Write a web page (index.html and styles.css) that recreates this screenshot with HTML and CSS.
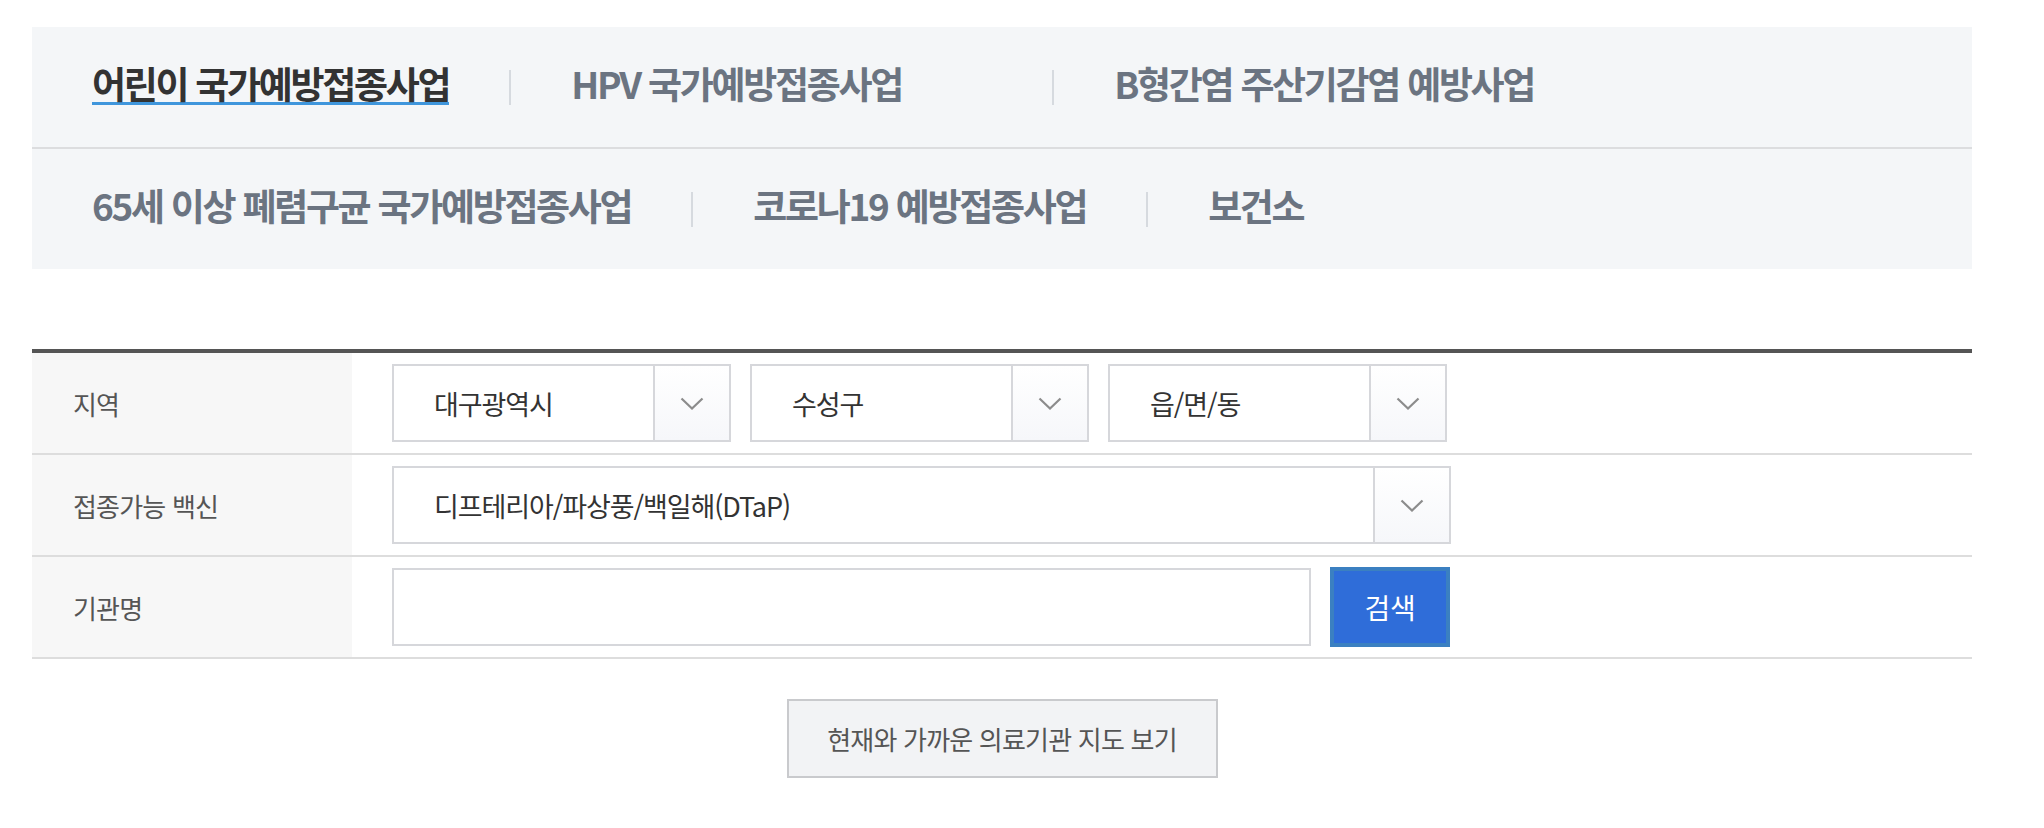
FILE: index.html
```html
<!DOCTYPE html>
<html lang="ko">
<head>
  <meta charset="UTF-8">
  <meta name="viewport" content="width=device-width, initial-scale=1.0">
  <title>예방접종 의료기관 찾기</title>
  <link rel="stylesheet" href="styles.css">
</head>
<body>
  <nav class="tab-nav">
    <ul class="tab-row">
      <li class="tab-item is-active"><a href="#">어린이 국가예방접종사업</a></li>
      <li class="tab-item tab-item--wide"><a href="#">HPV 국가예방접종사업</a></li>
      <li class="tab-item"><a href="#">B형간염 주산기감염 예방사업</a></li>
    </ul>
    <ul class="tab-row">
      <li class="tab-item"><a href="#">65세 이상 폐렴구균 국가예방접종사업</a></li>
      <li class="tab-item"><a href="#">코로나19 예방접종사업</a></li>
      <li class="tab-item"><a href="#">보건소</a></li>
    </ul>
  </nav>

  <form class="search-form" onsubmit="return false;">
    <div class="form-row">
      <div class="form-label">지역</div>
      <div class="form-field">
        <div class="select-box">
          <span class="select-value">대구광역시</span>
          <span class="select-arrow"><svg width="24" height="13" viewBox="0 0 24 13"><path d="M1.5 1.5 L12 11.5 L22.5 1.5" fill="none" stroke="#8c8c8c" stroke-width="2.2"/></svg></span>
        </div>
        <div class="select-box">
          <span class="select-value">수성구</span>
          <span class="select-arrow"><svg width="24" height="13" viewBox="0 0 24 13"><path d="M1.5 1.5 L12 11.5 L22.5 1.5" fill="none" stroke="#8c8c8c" stroke-width="2.2"/></svg></span>
        </div>
        <div class="select-box">
          <span class="select-value">읍/면/동</span>
          <span class="select-arrow"><svg width="24" height="13" viewBox="0 0 24 13"><path d="M1.5 1.5 L12 11.5 L22.5 1.5" fill="none" stroke="#8c8c8c" stroke-width="2.2"/></svg></span>
        </div>
      </div>
    </div>
    <div class="form-row">
      <div class="form-label">접종가능 백신</div>
      <div class="form-field">
        <div class="select-box select-box--wide">
          <span class="select-value">디프테리아/파상풍/백일해(DTaP)</span>
          <span class="select-arrow"><svg width="24" height="13" viewBox="0 0 24 13"><path d="M1.5 1.5 L12 11.5 L22.5 1.5" fill="none" stroke="#8c8c8c" stroke-width="2.2"/></svg></span>
        </div>
      </div>
    </div>
    <div class="form-row">
      <div class="form-label">기관명</div>
      <div class="form-field">
        <input class="text-input" type="text" aria-label="기관명">
        <button class="btn-search" type="submit">검색</button>
      </div>
    </div>
  </form>

  <div class="map-link">
    <button class="btn-map" type="button">현재와 가까운 의료기관 지도 보기</button>
  </div>
</body>
</html>
```

FILE: styles.css
```css
* {
  box-sizing: border-box;
}

body {
  margin: 0;
  padding: 27px 72px 0 32px;
  background: #fff;
  font-family: "Noto Sans CJK KR", "Noto Sans", sans-serif;
}

/* tabs */
.tab-nav {
  background: #f4f6f8;
}

.tab-row {
  display: flex;
  align-items: center;
  height: 120px;
  margin: 0;
  padding: 0;
  list-style: none;
}

.tab-row + .tab-row {
  height: 122px;
  border-top: 2px solid #dcdddf;
}

.tab-item {
  display: flex;
  align-items: center;
  padding-right: 60px;
}

.tab-item:first-child {
  padding-left: 60px;
}

.tab-item + .tab-item::before {
  content: '';
  width: 2px;
  height: 35px;
  margin-right: 60px;
  background: #d6dadf;
}

.tab-item--wide {
  width: 543px;
}

.tab-item a {
  display: inline-block;
  margin-bottom: 4px;
  border-bottom: 3px solid transparent;
  font-size: 37px;
  font-weight: 700;
  letter-spacing: -2.3px;
  line-height: 1;
  color: #6b7481;
  text-decoration: none;
}

.tab-item.is-active a {
  color: #333;
  border-bottom-color: #3f96dc;
}

/* search form */
.search-form {
  margin-top: 80px;
  border-top: 4px solid #555;
}

.form-row {
  display: flex;
  height: 102px;
  border-bottom: 2px solid #dddddd;
}

.form-label {
  display: flex;
  align-items: center;
  width: 320px;
  padding-left: 41px;
  background: #f7f7f7;
  font-size: 26px;
  letter-spacing: -0.8px;
  color: #555;
}

.form-field {
  display: flex;
  align-items: center;
  gap: 19px;
  padding-left: 40px;
}

.select-box {
  display: flex;
  width: 339px;
  height: 78px;
  border: 2px solid #d6d7db;
  background: #fff;
}

.select-box--wide {
  width: 1059px;
}

.select-value {
  flex: 1;
  display: flex;
  align-items: center;
  padding-left: 40px;
  font-size: 27px;
  letter-spacing: -1.1px;
  color: #333;
}

.select-arrow {
  display: flex;
  align-items: center;
  justify-content: center;
  width: 76px;
  border-left: 2px solid #d6d7db;
  background: linear-gradient(#fff, #f6f7fa);
}

.text-input {
  width: 919px;
  height: 78px;
  border: 2px solid #d6d7db;
  background: #fff;
  outline: none;
}

.btn-search {
  width: 120px;
  height: 80px;
  border: 4px solid #3b80c1;
  background: #2f6dd9;
  color: #fff;
  font-family: inherit;
  font-size: 28px;
  letter-spacing: -0.3px;
}

/* map link */
.map-link {
  display: flex;
  justify-content: center;
  padding-top: 40px;
}

.btn-map {
  width: 431px;
  height: 79px;
  border: 2px solid #c9cacd;
  background: #f2f3f5;
  color: #555;
  font-family: inherit;
  font-size: 26px;
  letter-spacing: -0.8px;
}
```
